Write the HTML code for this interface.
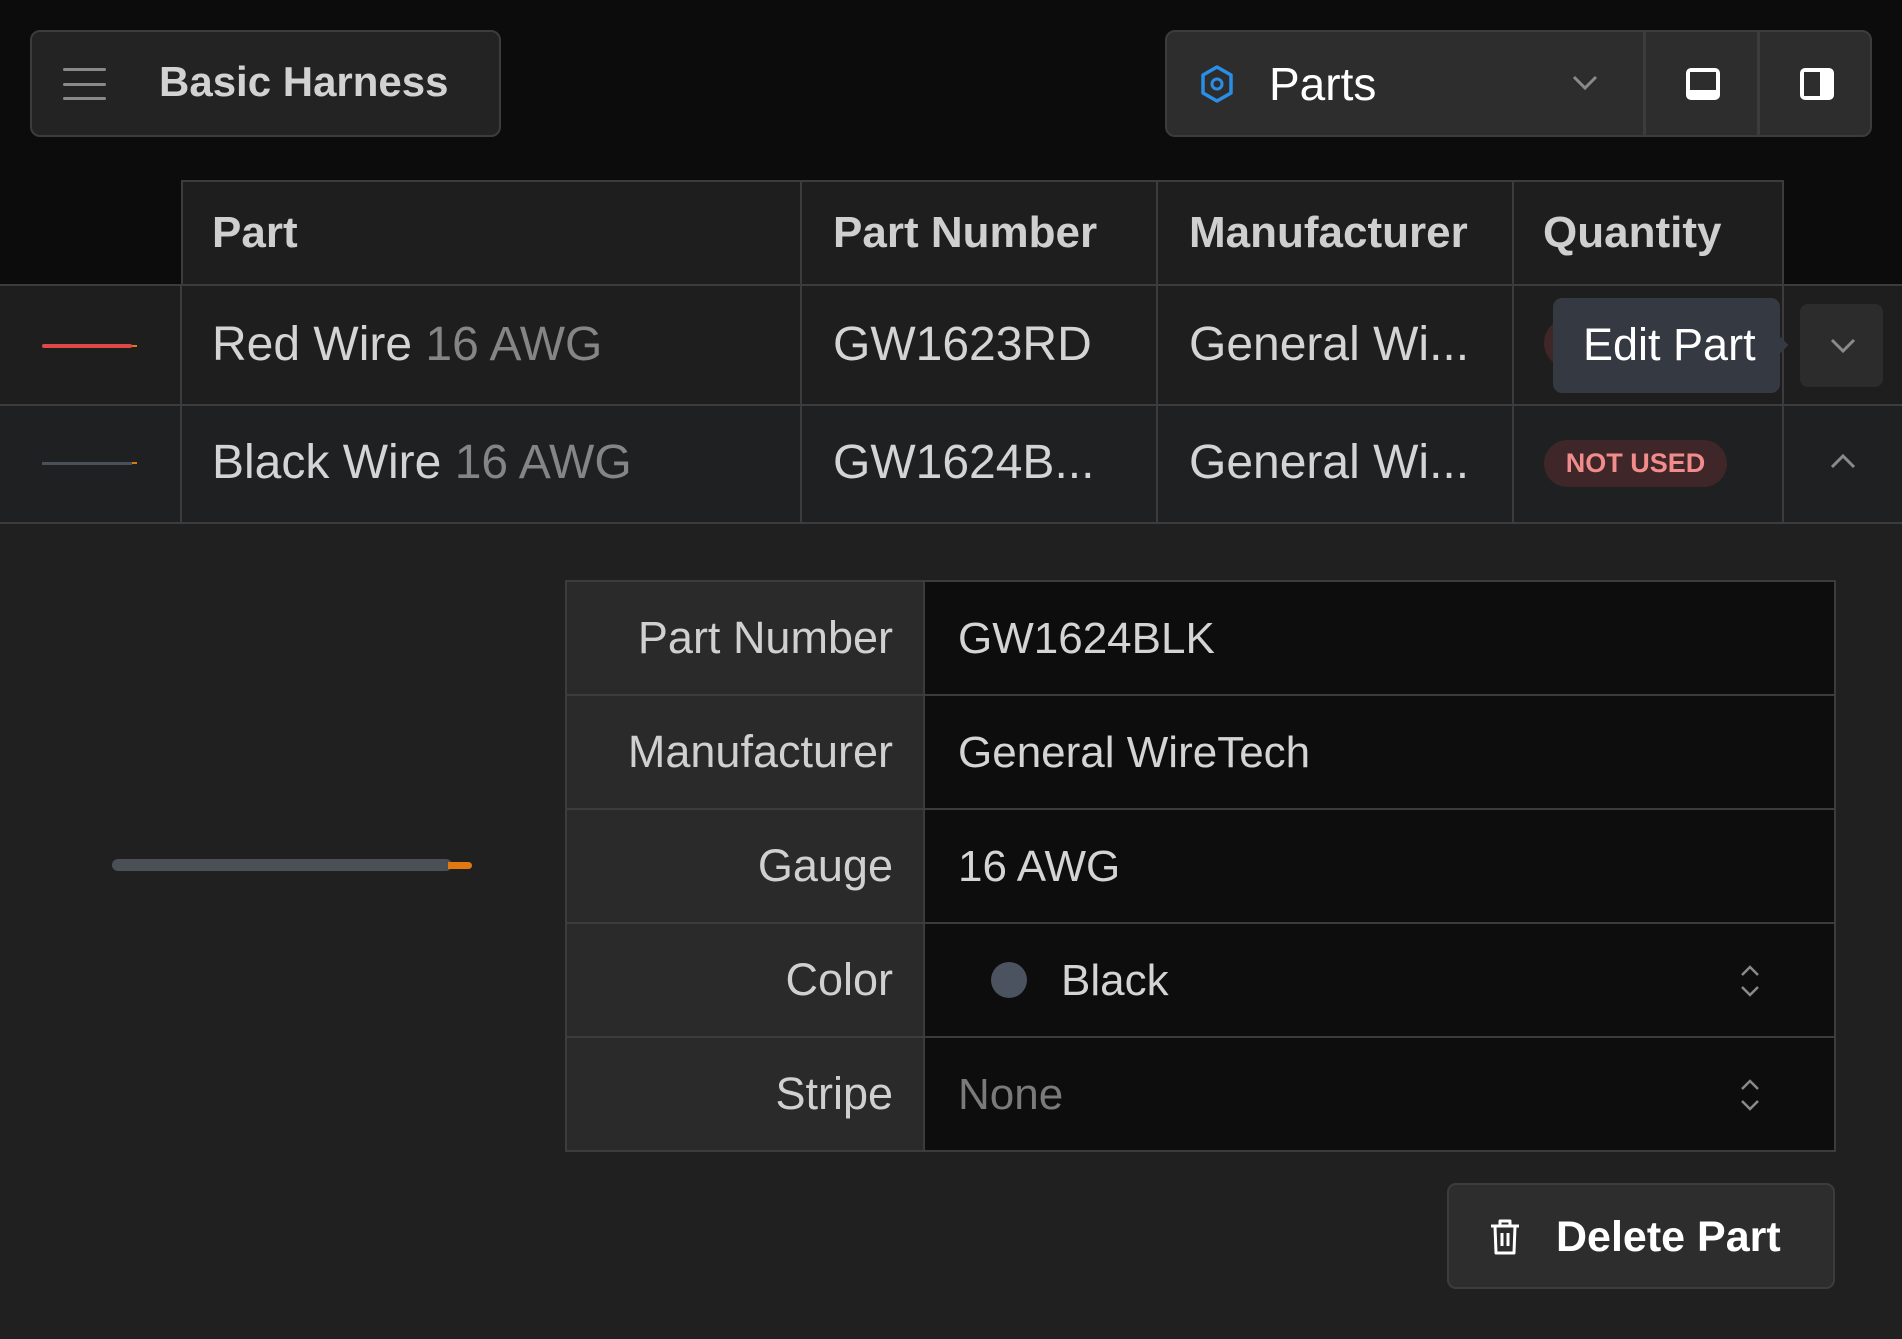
<!DOCTYPE html>
<html><head><meta charset="utf-8"><style>
*{box-sizing:border-box;margin:0;padding:0}
body{width:1902px;height:1339px;background:#202020;font-family:"Liberation Sans",sans-serif;position:relative;overflow:hidden;color:#d4d4d4}
.a{position:absolute}
.t{position:absolute;white-space:nowrap;font-size:45px;line-height:52px}
.r{font-size:48px}
.b{font-weight:bold}
</style></head><body>
<div class="a" style="left:0;top:0;width:1902px;height:285px;background:#0c0c0c"></div>
<!-- header left -->
<div class="a" style="left:30px;top:30px;width:471px;height:107px;background:#232323;border:2px solid #3c3c3c;border-radius:10px"></div>
<div class="a" style="left:63px;top:68px;width:43px;height:3px;background:#8a8a8a;border-radius:2px"></div>
<div class="a" style="left:63px;top:83px;width:43px;height:3px;background:#8a8a8a;border-radius:2px"></div>
<div class="a" style="left:63px;top:97px;width:43px;height:3px;background:#8a8a8a;border-radius:2px"></div>
<div class="t b" style="left:159px;top:56px;font-size:42px;color:#d2d2d2">Basic Harness</div>
<!-- header right -->
<div class="a" style="left:1165px;top:30px;width:707px;height:107px;background:#2d2d2d;border:2px solid #3c3c3c;border-radius:10px"></div>
<div class="a" style="left:1643px;top:31px;width:3px;height:105px;background:#3c3c3c"></div>
<div class="a" style="left:1757px;top:31px;width:3px;height:105px;background:#3c3c3c"></div>
<svg class="a" style="left:1199px;top:64px" width="36" height="40" viewBox="0 0 36 40"><polygon points="18,3 32,11 32,29 18,37 4,29 4,11" fill="none" stroke="#2a8de6" stroke-width="3.5" stroke-linejoin="round"/><circle cx="18" cy="20" r="5" fill="none" stroke="#2a8de6" stroke-width="3"/></svg>
<div class="t" style="left:1269px;top:58px;font-size:46px;color:#fff">Parts</div>
<svg class="a" style="left:1572px;top:74px" width="26" height="18"><path d="M2 3 L13 14 L24 3" fill="none" stroke="#8a8a8a" stroke-width="3"/></svg>
<svg class="a" style="left:1684px;top:66px" width="38" height="36"><rect x="2" y="2" width="34" height="32" rx="5" fill="#fff"/><rect x="6" y="6" width="26" height="18" fill="#2d2d2d"/></svg>
<svg class="a" style="left:1798px;top:66px" width="38" height="36"><rect x="2" y="2" width="34" height="32" rx="5" fill="#fff"/><rect x="6" y="6" width="16" height="24" fill="#2d2d2d"/></svg>
<!-- table header -->
<div class="a" style="left:181px;top:180px;width:1603px;height:106px;background:#1e1e1e;border:2px solid #3c3c3c"></div>
<!-- rows -->
<div class="a" style="left:0;top:284px;width:1902px;height:120px;background:#1e1e1e;border-top:2px solid #3c3c3c"></div>
<div class="a" style="left:0;top:404px;width:1902px;height:120px;background:#1f2022;border-top:2px solid #3c3c3c;border-bottom:2px solid #3c3c3c"></div>
<div class="a" style="left:800px;top:180px;width:2px;height:343px;background:#3c3c3c"></div>
<div class="a" style="left:1156px;top:180px;width:2px;height:343px;background:#3c3c3c"></div>
<div class="a" style="left:1512px;top:180px;width:2px;height:343px;background:#3c3c3c"></div>
<div class="a" style="left:180px;top:284px;width:2px;height:239px;background:#3c3c3c"></div>
<div class="a" style="left:1782px;top:284px;width:2px;height:239px;background:#3c3c3c"></div>
<div class="t b" style="left:212px;top:207px;font-size:44px;color:#cfcfcf">Part</div>
<div class="t b" style="left:833px;top:207px;font-size:44px;color:#cfcfcf">Part Number</div>
<div class="t b" style="left:1189px;top:207px;font-size:44px;color:#cfcfcf">Manufacturer</div>
<div class="t b" style="left:1543px;top:207px;font-size:44px;color:#cfcfcf">Quantity</div>
<div class="a" style="left:42px;top:344px;width:90px;height:4px;background:#e04848;border-radius:2px"></div>
<div class="a" style="left:132px;top:345px;width:5px;height:2px;background:#d97b10"></div>
<div class="a" style="left:42px;top:462px;width:90px;height:3px;background:#4a5058"></div>
<div class="a" style="left:132px;top:462px;width:5px;height:2px;background:#d97b10"></div>
<div class="t r" style="left:212px;top:319px">Red Wire <span style="color:#858585">16 AWG</span></div>
<div class="t r" style="left:833px;top:319px">GW1623RD</div>
<div class="t r" style="left:1189px;top:319px">General Wi...</div>
<div class="a" style="left:1544px;top:318px;width:30px;height:50px;background:#3f2628;border-radius:25px 0 0 25px"></div>
<div class="a" style="left:1553px;top:298px;width:227px;height:95px;background:#343942;border-radius:9px"></div>
<div class="a" style="left:1774px;top:339px;width:12px;height:12px;background:#343942;transform:rotate(45deg)"></div>
<div class="t" style="left:1583px;top:319px;color:#fff">Edit Part</div>
<div class="a" style="left:1800px;top:304px;width:83px;height:83px;background:#2c2c2c;border-radius:8px"></div>
<svg class="a" style="left:1829px;top:337px" width="28" height="18"><path d="M3 3 L14 14 L25 3" fill="none" stroke="#8a8a8a" stroke-width="3"/></svg>
<div class="t r" style="left:212px;top:437px">Black Wire <span style="color:#858585">16 AWG</span></div>
<div class="t r" style="left:833px;top:437px">GW1624B...</div>
<div class="t r" style="left:1189px;top:437px">General Wi...</div>
<div class="a" style="left:1544px;top:440px;width:183px;height:47px;background:#3f2628;border-radius:24px"></div>
<div class="t b" style="left:1544px;top:444px;width:183px;text-align:center;font-size:27px;line-height:38px;color:#f28b8b">NOT USED</div>
<svg class="a" style="left:1829px;top:452px" width="28" height="18"><path d="M3 15 L14 4 L25 15" fill="none" stroke="#8a8a8a" stroke-width="3"/></svg>
<!-- detail wire -->
<div class="a" style="left:112px;top:859px;width:340px;height:12px;background:#4b5057;border-radius:6px"></div>
<div class="a" style="left:448px;top:862px;width:24px;height:7px;background:#e07a10;border-radius:0 4px 4px 0"></div>
<!-- detail table -->
<div class="a" style="left:565px;top:580px;width:1271px;height:572px;border:2px solid #3c3c3c;background:#0d0d0d"></div>
<div class="a" style="left:567px;top:582px;width:358px;height:568px;background:#2a2a2a;border-right:2px solid #3c3c3c"></div>
<div class="a" style="left:567px;top:694px;width:1267px;height:2px;background:#3c3c3c"></div>
<div class="a" style="left:567px;top:808px;width:1267px;height:2px;background:#3c3c3c"></div>
<div class="a" style="left:567px;top:922px;width:1267px;height:2px;background:#3c3c3c"></div>
<div class="a" style="left:567px;top:1036px;width:1267px;height:2px;background:#3c3c3c"></div>
<div class="t" style="left:560px;width:333px;text-align:right;top:612px;font-size:45px;color:#d0d0d0">Part Number</div>
<div class="t" style="left:560px;width:333px;text-align:right;top:726px;font-size:45px;color:#d0d0d0">Manufacturer</div>
<div class="t" style="left:560px;width:333px;text-align:right;top:840px;font-size:45px;color:#d0d0d0">Gauge</div>
<div class="t" style="left:560px;width:333px;text-align:right;top:954px;font-size:45px;color:#d0d0d0">Color</div>
<div class="t" style="left:560px;width:333px;text-align:right;top:1068px;font-size:45px;color:#d0d0d0">Stripe</div>
<div class="t" style="left:958px;top:613px;font-size:44px">GW1624BLK</div>
<div class="t" style="left:958px;top:727px;font-size:44px">General WireTech</div>
<div class="t" style="left:958px;top:841px;font-size:44px">16 AWG</div>
<div class="a" style="left:991px;top:962px;width:36px;height:36px;border-radius:50%;background:#4b5360"></div>
<div class="t" style="left:1061px;top:955px;font-size:44px">Black</div>
<div class="t" style="left:958px;top:1069px;font-size:44px;color:#7a7a7a">None</div>
<svg class="a" style="left:1739px;top:964px" width="22" height="34"><path d="M3 11 L11 3 L19 11 M3 23 L11 31 L19 23" fill="none" stroke="#8a8a8a" stroke-width="2.5"/></svg>
<svg class="a" style="left:1739px;top:1078px" width="22" height="34"><path d="M3 11 L11 3 L19 11 M3 23 L11 31 L19 23" fill="none" stroke="#8a8a8a" stroke-width="2.5"/></svg>
<!-- delete -->
<div class="a" style="left:1447px;top:1183px;width:388px;height:106px;background:#2d2d2d;border:2px solid #3c3c3c;border-radius:9px"></div>
<svg class="a" style="left:1488px;top:1217px" width="34" height="40" viewBox="0 0 34 40"><path d="M3 9 H31 M12 9 V4 H22 V9 M7 9 L8 36 H26 L27 9 M14 16 V29 M20 16 V29" fill="none" stroke="#fff" stroke-width="3" stroke-linejoin="round"/></svg>
<div class="t b" style="left:1556px;top:1211px;font-size:43px;color:#fff">Delete Part</div>
</body></html>
